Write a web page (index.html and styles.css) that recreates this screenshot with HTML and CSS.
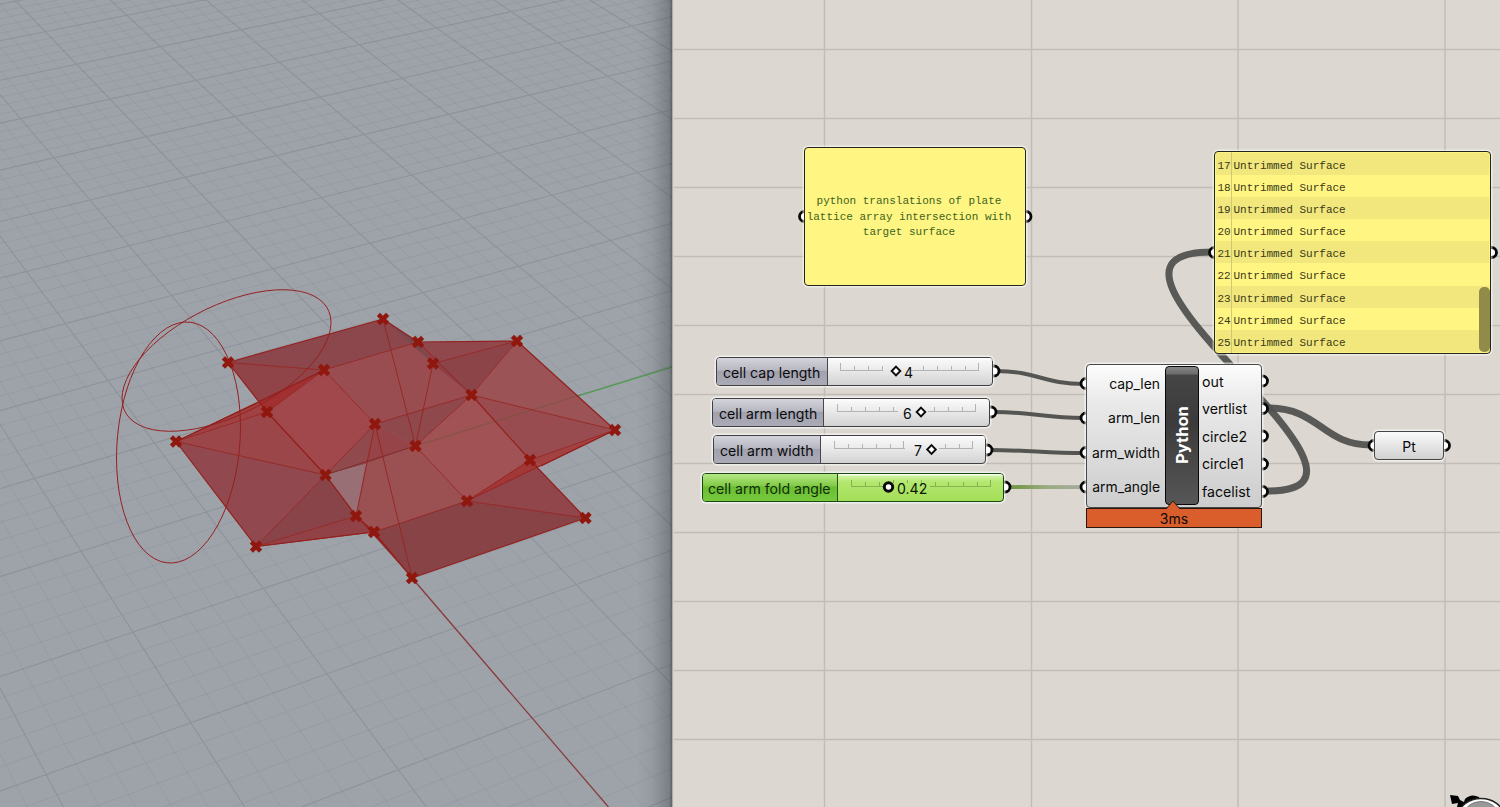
FILE: index.html
```html
<!DOCTYPE html>
<html lang="en">
<head>
<meta charset="utf-8">
<title>Plate lattice definition</title>
<link rel="stylesheet" href="styles.css">
</head>
<body>
<main class="workspace">
  <section class="viewport">
    <svg class="scene" viewBox="0 0 672 807" width="672" height="807">
      <path id="minor" class="grid-minor"/>
      <path id="major" class="grid-major"/>
      <path class="axis-y" d="M415 446L672 367"/>
      <path class="axis-x" d="M412 578L608.500 807"/>
      <g id="mesh"></g>
      <g class="curves">
        <circle r="1" transform="matrix(62 -15.5 0 119.5 178.500 442.500)"/>
        <circle r="1" transform="matrix(104.5 -38 0 59.7 226.500 360.500)"/>
      </g>
      <g id="points" class="points"></g>
    </svg>
  </section>
  <section class="canvas">
    <svg class="wires" viewBox="672 0 828 807" width="828" height="807">
      <defs><linearGradient id="fade" gradientUnits="userSpaceOnUse" x1="1010" y1="0" x2="1082" y2="0"><stop offset="0" stop-color="#6d9440"/><stop offset=".5" stop-color="#9aab80"/><stop offset="1" stop-color="#a7aaa0"/></linearGradient></defs>
      <path class="sheet" d="M824.500 0V807M1031.500 0V807M1238 0V807M1445 0V807M672 49.500H1500M672 118.500H1500M672 187.500H1500M672 256.500H1500M672 325.500H1500M672 394.500H1500M672 463.500H1500M672 532.500H1500M672 601.500H1500M672 670.500H1500M672 739.500H1500"/>
      <path class="wire" d="M996 371C1036 371 1044 384 1084 384"/>
      <path class="wire" d="M994 412C1034 412 1044 418 1084 418"/>
      <path class="wire" d="M989 450C1029 450 1044 453 1084 453"/>
      <path class="wire angle" d="M1008 487L1084 487.200"/>
      <path class="wire list" d="M1268 408C1320 408 1322 445 1371 445"/>
      <path class="wire list" d="M1268 491C1424 491 1046 252 1212 252"/>
      <g class="grips">
        <circle cx="994" cy="371" r="5"/><circle cx="991" cy="412" r="5"/><circle cx="987" cy="450" r="5"/><circle cx="1005" cy="487" r="5"/>
        <circle cx="1086" cy="383.500" r="5"/><circle cx="1086" cy="418" r="5"/><circle cx="1086" cy="452.500" r="5"/><circle cx="1086" cy="487" r="5"/>
        <circle cx="1262.500" cy="381" r="5"/><circle cx="1262.500" cy="408.500" r="5"/><circle cx="1262.500" cy="436" r="5"/><circle cx="1262.500" cy="464" r="5"/><circle cx="1262.500" cy="491.500" r="5"/>
        <circle cx="1374" cy="445.500" r="5"/><circle cx="1444.500" cy="445.500" r="5"/>
        <circle cx="804.500" cy="216.500" r="5"/><circle cx="1026" cy="216.500" r="5"/>
        <circle cx="1214.500" cy="252.500" r="5"/><circle cx="1491.500" cy="252.500" r="5"/>
      </g>
    </svg>

    <div class="panel note"><p>python translations of plate<br>lattice array intersection with<br>target surface</p></div>

    <div class="panel list-panel">
      <div class="row"><span class="num">17</span><span>Untrimmed Surface</span></div>
      <div class="row"><span class="num">18</span><span>Untrimmed Surface</span></div>
      <div class="row"><span class="num">19</span><span>Untrimmed Surface</span></div>
      <div class="row"><span class="num">20</span><span>Untrimmed Surface</span></div>
      <div class="row"><span class="num">21</span><span>Untrimmed Surface</span></div>
      <div class="row"><span class="num">22</span><span>Untrimmed Surface</span></div>
      <div class="row"><span class="num">23</span><span>Untrimmed Surface</span></div>
      <div class="row"><span class="num">24</span><span>Untrimmed Surface</span></div>
      <div class="row"><span class="num">25</span><span>Untrimmed Surface</span></div>
      <i class="thumb"></i>
    </div>

    <div class="slider cap"><span class="name">cell cap length</span><div class="track">
      <svg width="165" height="26"><path class="ticks" d="M12 12.500H55M82 12.500H151M12.500 5V13M26.500 8V13M40.500 8V13M54.500 8V13M95.500 8V13M109.500 8V13M123.500 8V13M137.500 8V13M150.500 5V13"/><path class="knob" d="M68 8.700L72.300 13L68 17.300L63.700 13Z"/></svg><b class="value v4">4</b></div></div>
    <div class="slider len"><span class="name">cell arm length</span><div class="track">
      <svg width="165" height="26"><path class="ticks" d="M13 12.500H74M104 12.500H152M13.500 5V12M27.500 8V12M41.500 8V12M55.500 8V12M69.500 8V12M110.500 8V12M124.500 8V12M138.500 8V12M151.500 5V12"/><path class="knob" d="M97 8.700L101.300 13L97 17.300L92.700 13Z"/></svg><b class="value v6">6</b></div></div>
    <div class="slider wid"><span class="name">cell arm width</span><div class="track">
      <svg width="165" height="26"><path class="ticks" d="M13 12.500H84M118 12.500H152M13.500 5V12M27.500 8V12M41.500 8V12M55.500 8V12M69.500 8V12M82.500 5V12M124.500 8V12M138.500 8V12M151.500 5V12"/><path class="knob" d="M110.500 9.200L114.800 13.500L110.500 17.800L106.200 13.500Z"/></svg><b class="value v7">7</b></div></div>
    <div class="slider fold"><span class="name">cell arm fold angle</span><div class="track">
      <svg width="165" height="26"><path class="ticks" d="M13 12.500H45M92 12.500H153M13.500 6V12M27.500 8V12M41.500 8V12M55.500 6V9M69.500 6V9M83.500 6V12M97.500 8V12M110.500 8V12M125.500 8V12M139.500 8V12M152.500 6V12"/><circle class="knob ring" cx="50.500" cy="13" r="4.200"/></svg><b class="value vf">0.42</b></div></div>

    <div class="component">
      <div class="ins"><span>cap_len</span><span>arm_len</span><span>arm_width</span><span>arm_angle</span></div>
      <div class="core"><span>Python</span></div>
      <div class="outs"><span>out</span><span>vertlist</span><span>circle2</span><span>circle1</span><span>facelist</span></div>
    </div>
    <div class="timer"><svg class="tip" width="14" height="9"><path d="M0 8L7 0L14 8" /></svg>3ms</div>

    <div class="param">Pt</div>

    <svg class="compass" width="56" height="14" viewBox="1444 793 56 14">
      <path d="M1450 795L1458 796L1460 800L1464 802L1465 799Q1471 793 1479 797L1480 801L1464 807H1457L1458 803L1452 804Z"/>
      <ellipse class="dial" cx="1481" cy="815" rx="22" ry="16.500"/>
      <ellipse class="disc" cx="1481" cy="815" rx="17" ry="13.500"/>
    </svg>
  </section>
</main>
<script src="scene.js"></script>
</body>
</html>
```
FILE: styles.css
```css
* { box-sizing: border-box; }
body { margin: 0; width: 1500px; height: 807px; overflow: hidden; font-family: Inter, "Noto Sans", sans-serif; color: #0b0b0b; }
.workspace { display: flex; width: 1500px; height: 807px; }
.viewport { position: relative; width: 672px; height: 807px; overflow: hidden; background: #9ea3aa; }
.viewport::after { content: ""; position: absolute; inset: 0 0 0 auto; width: 36px; background: linear-gradient(90deg, rgba(70,75,75,0), rgba(70,75,75,.1) 45%, rgba(60,66,67,.36) 92%, rgba(50,58,60,.62)); }
.scene, .wires { display: block; }
.grid-minor, .grid-major { fill: none; }
.grid-minor { stroke: #868c94; stroke-opacity: .3; stroke-width: 1; }
.grid-major { stroke: #7d838b; stroke-opacity: .5; stroke-width: 1.1; }
.axis-y { stroke: #4d9c48; stroke-width: 1.2; }
.axis-x { stroke: #8c3a3a; stroke-width: 1.2; }
.face { fill-opacity: .94; }
.edge { fill: none; stroke: #97211f; stroke-opacity: .85; stroke-width: 1; }
.rim { fill: none; stroke: #94201d; stroke-width: 1.2; }
.under { fill: none; stroke: #73593c; stroke-width: 1; opacity: .65; }
.under-dark { stroke: #7a2a27; opacity: .9; }
.curves circle { fill: none; stroke: #951f20; stroke-width: 1; vector-effect: non-scaling-stroke; }
.points path { stroke: #8f170e; stroke-width: 4.5; fill: none; }

.canvas { position: relative; width: 828px; height: 807px; overflow: hidden; background: #dcd8d1; }
.canvas::before { content: ""; position: absolute; inset: 0 auto 0 0; width: 2px; background: linear-gradient(90deg, #989a9a, #e9e6df); }
.sheet { stroke: #c1bdb6; stroke-width: 1.5; fill: none; }
.wire { fill: none; stroke: #555553; stroke-width: 4; }
.wire.angle { stroke: url(#fade); stroke-width: 3.8; }
.wire.list { stroke-width: 7; stroke: #51514f; stroke-opacity: .94; }
.grips circle { fill: #fff; stroke: #070707; stroke-width: 2.8; }

.panel { position: absolute; border: 1.5px solid #25251f; border-radius: 4px; background: #fff582; box-shadow: 0 0 0 1.5px rgba(255,255,255,.5); font: 11px/15.5px "Courier New", "Liberation Mono", monospace; overflow: hidden; }
.note { left: 132px; top: 147px; width: 222px; height: 139px; display: flex; align-items: center; justify-content: center; color: #3b6420; }
.note p { margin: 2px 12px 0 0; text-align: center; white-space: nowrap; }
.list-panel { left: 542px; top: 151px; width: 277px; height: 203px; padding: 1px; color: #3a3818; background: linear-gradient(90deg, transparent 16px, #d0ca78 16px, #d0ca78 17px, transparent 17px), #fff582; }
.row { display: flex; height: 22.100px; padding-left: 1.500px; line-height: 27px; white-space: pre; }
.row:nth-child(odd) { background: rgba(200,195,110,.26); }
.num { width: 16px; }
.thumb { position: absolute; right: 0; bottom: 1px; width: 11px; height: 65px; border-radius: 5px; background: #908b49; }

.slider { position: absolute; display: flex; height: 29px; border: 1.5px solid #404043; border-radius: 4px; box-shadow: 0 0 0 1.5px rgba(255,255,255,.6); background: linear-gradient(#fbfbfb, #ececec 40%, #d2d2d2); font-size: 14.100px; line-height: 29px; white-space: nowrap; }
.name { flex: none; padding-left: 6px; border-right: 1.5px solid #47474b; background: linear-gradient(#d4d4dc 0, #b7b7c2 45%, #a2a2af 50%, #ababb8); border-radius: 3px 0 0 3px; }
.track { position: relative; flex: 1; box-shadow: inset 0 1.5px rgba(255,255,255,.75); border-radius: 0 3px 3px 0; }
.track svg { display: block; }
.ticks { stroke: #b3b3b3; stroke-width: 1; fill: none; }
.knob { fill: #fff; stroke: #0a0a0a; stroke-width: 1.9; }
.ring { stroke-width: 3; }
.value { position: absolute; top: 0; font-weight: 400; }
.cap { left: 44px; top: 357px; width: 277px; } .cap .name { width: 111px; }
.len { left: 40px; top: 398px; width: 278px; } .len .name { width: 111px; }
.wid { left: 41px; top: 435px; width: 273px; } .wid .name { width: 107px; }
.fold { left: 30px; top: 473px; width: 302px; border-color: #174912; background: linear-gradient(#d7f6b0, #b3e76f 30%, #a4de58); color: #102c0a; } .fold .name { width: 135px; padding-left: 5px; border-color: #205517; background: linear-gradient(#b6e787, #84cc49 42%, #6abe31 50%, #78c93d); }
.fold .ticks { stroke: #83b350; } .fold .value { color: #0a1a05; }
.v4 { left: 76px; } .v6 { left: 79px; } .v7 { left: 93px; } .vf { left: 59px; }

.component { position: absolute; left: 414px; top: 363.500px; width: 176px; height: 144px; display: flex; border: 1.5px solid #48484a; border-radius: 4px; background: linear-gradient(#fdfdfd, #eaeaea 25%, #cdcdcd); box-shadow: 0 0 0 1.5px rgba(255,255,255,.6); font-size: 14.200px; }
.ins { width: 73px; display: flex; flex-direction: column; align-items: flex-end; padding-top: 2px; font-size: 13.900px; }
.ins span { height: 34.600px; line-height: 35px; }
.core { width: 34px; height: 139px; margin: 1px 3px 0 5px; border: 1.5px solid #080808; border-radius: 4px; background: linear-gradient(#858585 0, #6c6c6c 5%, #454545 6%, #3b3b3b 40%, #565656); display: flex; align-items: center; justify-content: center; color: #fff; font-weight: 700; font-size: 16.500px; }
.core span { transform: rotate(-90deg); }
.outs { display: flex; flex-direction: column; padding-top: 2px; }
.outs span { height: 27.600px; line-height: 29px; }
.timer { position: absolute; left: 414px; top: 508px; width: 176px; height: 20px; border: 1.5px solid #27170f; background: #d95e2b; font-size: 14px; line-height: 20px; text-align: center; }
.tip { position: absolute; left: 79px; top: -8px; } .tip path { fill: #d95e2b; stroke: #27170f; stroke-width: 1; }
.param { position: absolute; left: 702px; top: 431px; width: 70px; height: 29px; border: 1.5px solid #454545; border-radius: 4px; background: linear-gradient(#fafafa, #d2d2d2); box-shadow: 0 0 0 1.5px rgba(255,255,255,.6); font-size: 14px; line-height: 29px; text-align: center; }
.compass { position: absolute; right: 0; bottom: 0; }
.dial { fill: #fff; stroke: #222; stroke-width: 1.5; }
.disc { fill: #999; stroke: #777; }
```
FILE: scene.js
```js
// Known construction-plane crossings: grid a, grid b, screen x, screen y.
const ref = [
  [0,0,45,31.7],[0,1,77.1,64.3],[0,3,146.6,136],[0,6,272.1,268.3],[-1,2,20.6,118.3],[-1,5,129.9,246],
  [-2,5,25.7,271.7],[6,3,632.1,26],[4,6,638.1,172.7],[2,1,241.3,30],[5,2,510,11.7],[1,6,369.9,243.3],
  [-3,9,81.1,551.7],[-3,11,190.8,722.7],[-2,10,263.7,589],[-2,12,399,768.7],[-1,11,453.6,629.3],
  [0,11,576.8,584.7],[0,12,658.3,669],[-1,12,531.2,717.3],[-1,9,325,475]
];
// Least-squares homography from the normal equations.
const A = Array.from({length: 8}, () => new Array(9).fill(0));
for (const [a, b, x, y] of ref) {
  for (const r of [[a,b,1,0,0,0,-a*x,-b*x,x],[0,0,0,a,b,1,-a*y,-b*y,y]])
    for (let i = 0; i < 8; i++) for (let j = 0; j < 9; j++) A[i][j] += r[i] * r[j];
}
for (let i = 0; i < 8; i++) {
  let p = i;
  for (let k = i; k < 8; k++) if (Math.abs(A[k][i]) > Math.abs(A[p][i])) p = k;
  [A[i], A[p]] = [A[p], A[i]];
  for (let k = 0; k < 8; k++) if (k !== i) {
    const f = A[k][i] / A[i][i];
    for (let j = i; j < 9; j++) A[k][j] -= f * A[i][j];
  }
}
const h = A.map((r, i) => r[8] / r[i]);
const proj = (a, b) => {
  const w = h[6]*a + h[7]*b + 1;
  return ((h[0]*a + h[1]*b + h[2]) / w).toFixed(2) + ' ' + ((h[3]*a + h[4]*b + h[5]) / w).toFixed(2);
};
let minor = '', major = '';
const N = 5;
for (let i = -8*N; i <= 17*N; i++) {
  let s = '';
  if (i <= 9*N) s += 'M' + proj(i/N, -3) + 'L' + proj(i/N, 17);
  if (i >= -3*N) s += 'M' + proj(-8, i/N) + 'L' + proj(9, i/N);
  if (i % N) minor += s; else major += s;
}
document.getElementById('minor').setAttribute('d', minor);
document.getElementById('major').setAttribute('d', major);

const V = {A:[383,319],B:[418,342],C:[517,341],D:[228,362.5],E:[324,370],F:[433,363.5],G:[471.5,395],H:[267,412],
  I:[375,424],J:[415.5,446],K:[615,430],L:[176,441.5],M:[325.5,475],N:[530,460],O:[467,501],P:[356,516],Q:[374,532],
  R:[585.5,518],S:[256,546.5],T:[412,578],U:[366,464],W:[257,403],X:[541,466]};
const faces = {
  DABE:'#8a4146', DEH:'#903e42', EBGI:'#9a474a', IGJ:'#8e4246', MIJU:'#8f4347', ABF:'#77494e', BCF:'#8f4247',
  FCG:'#8b3e43', GCK:'#9c4e51', GKN:'#99464a', GNOJ:'#a04c50', LWH:'#a03a3b', LHM:'#9b4144', WEH:'#a0302f', HEIM:'#a04246', LMS:'#914248',
  MSP:'#883e43', SQP:'#903c40', MUP:'#976b72', IPU:'#994549', UJOQP:'#9b4a4d', UIJ:'#964448', OQTR:'#873d41', PQT:'#8c2528', ONR:'#8f4044', ONX:'#a23635', NKX:'#a33c3c'
};
const svg = (tag, attrs) => {
  const e = document.createElementNS('http://www.w3.org/2000/svg', tag);
  for (const k in attrs) e.setAttribute(k, attrs[k]);
  return e;
};
const path = s => 'M' + [...s].map(c => V[c].join(' ')).join('L');
const mesh = document.getElementById('mesh');
for (const f in faces) mesh.append(svg('path', {class: 'face', d: path(f) + 'Z', fill: faces[f]}));
mesh.append(svg('path', {class: 'under', d: 'M415 446L580 395'}));
mesh.append(svg('path', {class: 'under under-dark', d: 'M325 475L415 446'}));
for (const e of ['DE','EB','EI','IG','HE','LE','LH','LM','IM','MS','MP','SP','SQ','IP','IT','AJ','FJ','GJ','JO','BG','FC','CG','GK','NK','OK','NO','OQ','OR','HM'])
  mesh.append(svg('path', {class: 'edge', d: path(e)}));
for (const e of ['DA','AB','BC','CK','KX','NR','RT','GN','DH','HM','MP','QT','PQ','LS','SQ','LW','WE'])
  mesh.append(svg('path', {class: 'rim', d: path(e)}));
const pts = document.getElementById('points');
for (const k of 'ABCDEFGHIJKLMNOPQRST') {
  const [x, y] = V[k];
  pts.append(svg('path', {d: `M${x-4.6} ${y-4.6}L${x+4.6} ${y+4.6}M${x+4.6} ${y-4.6}L${x-4.6} ${y+4.6}`}));
}
```
